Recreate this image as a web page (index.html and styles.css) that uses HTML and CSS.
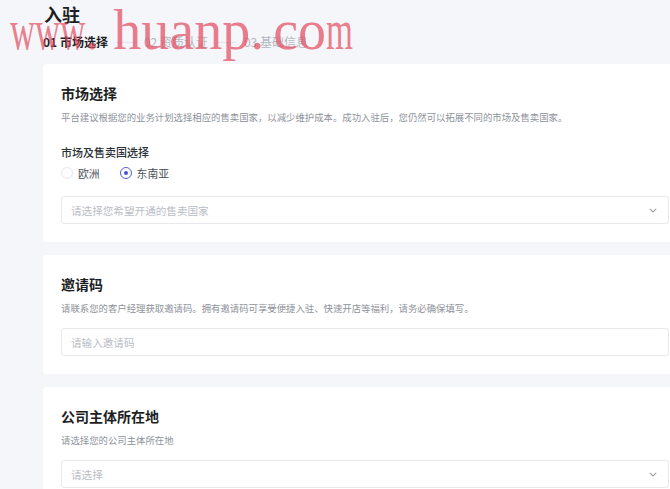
FILE: index.html
```html
<!DOCTYPE html>
<html lang="zh-CN">
<head>
<meta charset="utf-8">
<title>入驻</title>
<link rel="stylesheet" href="styles.css">
</head>
<body>
<div class="page">
  <h1 class="title">入驻</h1>
  <div class="steps">
    <span class="step active">01 市场选择</span>
    <span class="sep"></span>
    <span class="step">02 资质认证</span>
    <span class="sep"></span>
    <span class="step">03 基础信息</span>
  </div>

  <section class="card">
    <h2 class="card-title">市场选择</h2>
    <p class="card-desc">平台建议根据您的业务计划选择相应的售卖国家，以减少维护成本。成功入驻后，您仍然可以拓展不同的市场及售卖国家。</p>
    <div class="field-label">市场及售卖国选择</div>
    <div class="radios">
      <label class="radio"><span class="circle"></span>欧洲</label>
      <label class="radio checked"><span class="circle"></span>东南亚</label>
    </div>
    <div class="input select">
      <span class="placeholder">请选择您希望开通的售卖国家</span>
      <svg class="chev" width="8" height="5" viewBox="0 0 8 5"><polyline points="0.8,0.8 4,4 7.2,0.8" fill="none" stroke="#9a9ea6" stroke-width="1.1"/></svg>
    </div>
  </section>

  <section class="card">
    <h2 class="card-title">邀请码</h2>
    <p class="card-desc">请联系您的客户经理获取邀请码。拥有邀请码可享受便捷入驻、快速开店等福利，请务必确保填写。</p>
    <div class="input gap">
      <span class="placeholder">请输入邀请码</span>
    </div>
  </section>

  <section class="card">
    <h2 class="card-title">公司主体所在地</h2>
    <p class="card-desc">请选择您的公司主体所在地</p>
    <div class="input select gap">
      <span class="placeholder">请选择</span>
      <svg class="chev" width="8" height="5" viewBox="0 0 8 5"><polyline points="0.8,0.8 4,4 7.2,0.8" fill="none" stroke="#9a9ea6" stroke-width="1.1"/></svg>
    </div>
  </section>
</div>

<div class="watermark"><span class="narrow www">www</span>. huanp.<span class="tight"> </span>co<span class="narrow mm">m</span></div>
</body>
</html>
```

FILE: styles.css
```css
html, body {
  margin: 0;
  padding: 0;
  overflow: hidden;
  background: #f5f6fa;
}

body {
  font-family: "Noto Sans CJK SC", "Noto Sans", sans-serif;
  color: #1f2329;
  width: 670px;
  height: 489px;
  position: relative;
}

.page {
  padding: 2px 0 0 43px;
}

.title {
  margin: 0;
  font-size: 18px;
  line-height: 24px;
  font-weight: 700;
  color: #1d1f24;
  padding-left: 1px;
}

.steps {
  margin-top: 8px;
  display: flex;
  align-items: center;
  height: 16px;
}

.step {
  font-size: 12px;
  line-height: 16px;
  color: #b3b7c0;
  white-space: nowrap;
}

.step.active {
  color: #1d1f24;
  font-weight: 700;
}

.sep {
  width: 20px;
  height: 1px;
  margin: 0 8px;
  background: #e3e5ea;
}

.card {
  width: 608px;
  background: #fff;
  border-radius: 4px;
  padding: 20px 18px 18px;
  margin-top: 14px;
}

.card + .card {
  margin-top: 13px;
}

.card-title {
  margin: 0;
  font-size: 14px;
  line-height: 18px;
  font-weight: 700;
  color: #1d1f24;
}

.card-desc {
  margin: 8px 0 0;
  font-size: 9.4px;
  line-height: 14px;
  color: #8d929b;
  white-space: nowrap;
}

.field-label {
  margin-top: 20px;
  font-size: 11px;
  line-height: 16px;
  color: #2b2f36;
  font-weight: 500;
}

.radios {
  margin-top: 5px;
  display: flex;
  align-items: center;
  gap: 20px;
  height: 16px;
}

.radio {
  display: flex;
  align-items: center;
  gap: 5px;
  font-size: 10.8px;
  line-height: 16px;
  color: #4a4f57;
}

.circle {
  width: 10px;
  height: 10px;
  border: 1px solid #e4e6eb;
  border-radius: 50%;
  background: #fff;
  position: relative;
  box-sizing: content-box;
}

.radio.checked .circle {
  border-color: #5b5fd9;
}

.radio.checked .circle::after {
  content: "";
  position: absolute;
  left: 3px;
  top: 3px;
  width: 4px;
  height: 4px;
  border-radius: 50%;
  background: #4d51cf;
}

.input {
  margin-top: 15px;
  height: 26px;
  border: 1px solid #e7e9ee;
  border-radius: 3px;
  display: flex;
  align-items: center;
  justify-content: space-between;
  padding: 0 11px 0 9px;
  background: #fff;
}

.input.gap {
  margin-top: 13px;
}

.placeholder {
  font-size: 10.6px;
  color: #b9bdc5;
}

.chev {
  display: block;
}

.watermark {
  position: absolute;
  left: 10px;
  top: 2px;
  font-family: "Liberation Serif", serif;
  font-size: 56px;
  line-height: 56px;
  color: rgba(228, 72, 92, 0.7);
  white-space: pre;
  pointer-events: none;
}

.watermark .narrow {
  display: inline-block;
  transform: scaleX(0.62);
  transform-origin: left center;
}

.watermark .www {
  margin-right: -46px;
}

.watermark .mm {
  margin-right: -17px;
}

.watermark .tight {
  letter-spacing: -5px;
}
```
